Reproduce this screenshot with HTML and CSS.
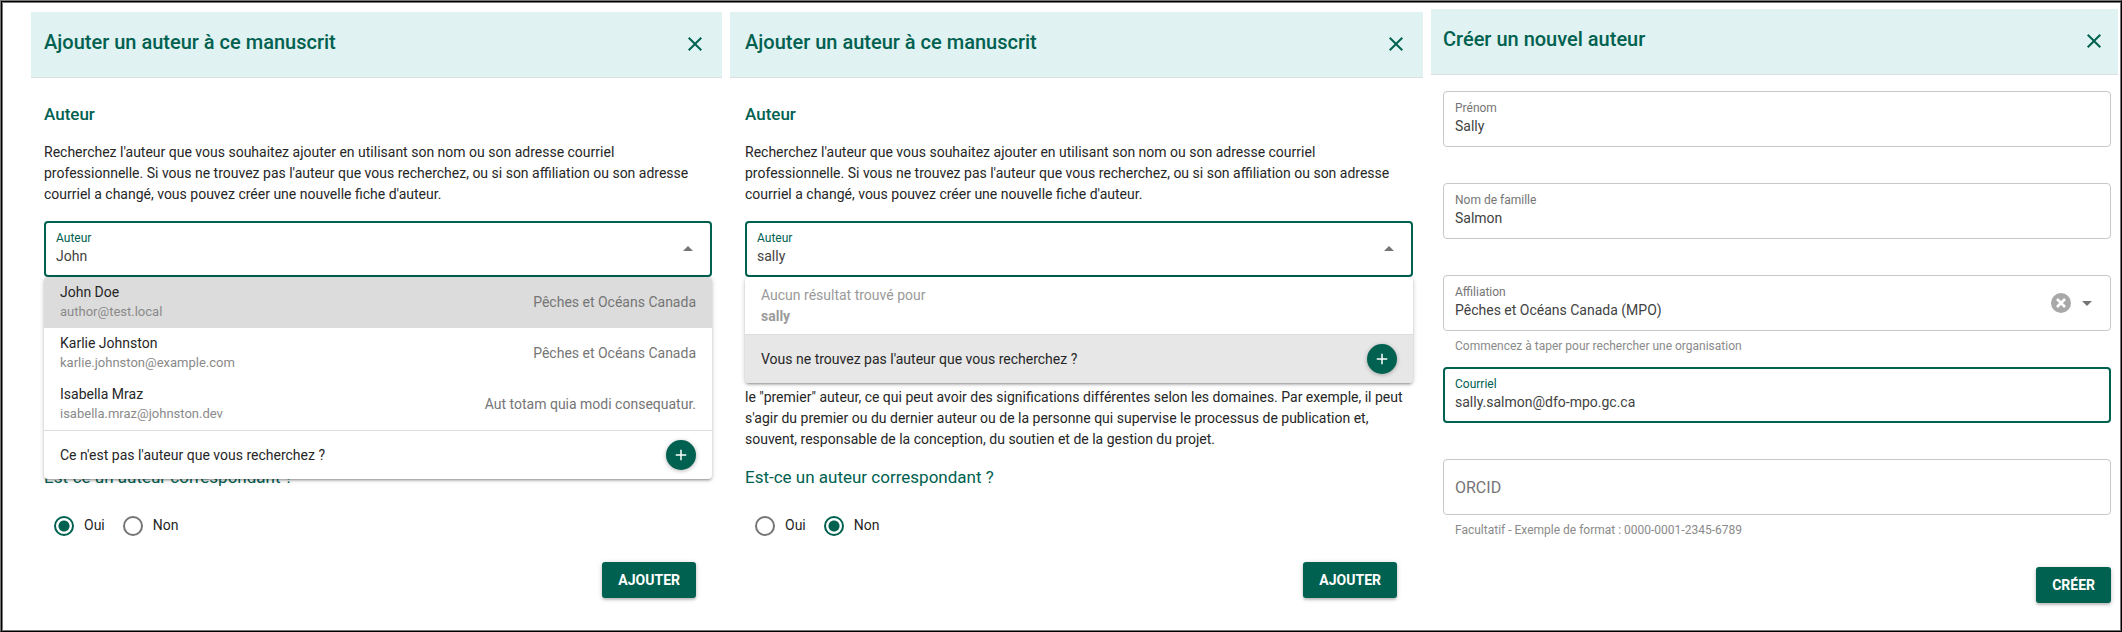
FILE: index.html
```
<!DOCTYPE html>
<html lang="fr">
<head>
<meta charset="utf-8">
<title>Auteurs du manuscrit</title>
<link rel="stylesheet" href="styles.css">
</head>
<body>
<main class="board">

  <section class="panel panel-search">
    <header class="panel-header">
      <h1 class="panel-title">Ajouter un auteur à ce manuscrit</h1>
      <button class="close" type="button" aria-label="Fermer"><svg viewBox="0 0 24 24"><path d="M19 6.41L17.59 5 12 10.59 6.41 5 5 6.41 10.59 12 5 17.59 6.41 19 12 13.41 17.59 19 19 17.59 13.41 12z"/></svg></button>
    </header>
    <form class="panel-body">
      <h2 class="section-title">Auteur</h2>
      <p class="text">Recherchez l'auteur que vous souhaitez ajouter en utilisant son nom ou son adresse courriel professionnelle. Si vous ne trouvez pas l'auteur que vous recherchez, ou si son affiliation ou son adresse courriel a changé, vous pouvez créer une nouvelle fiche d'auteur.</p>
      <div class="combo">
        <div class="field field-active">
          <div class="field-main">
            <label class="field-label" for="author-1">Auteur</label>
            <input class="field-input" id="author-1" type="text" value="John">
          </div>
          <svg class="icon" viewBox="0 0 24 24"><path d="M7 14l5-5 5 5z"/></svg>
        </div>
        <div class="menu">
          <ul class="options">
            <li class="option option-selected">
              <div><div class="option-name">John Doe</div><div class="option-mail">author@test.local</div></div>
              <div class="option-org">Pêches et Océans Canada</div>
            </li>
            <li class="option">
              <div><div class="option-name">Karlie Johnston</div><div class="option-mail">karlie.johnston@example.com</div></div>
              <div class="option-org">Pêches et Océans Canada</div>
            </li>
            <li class="option">
              <div><div class="option-name">Isabella Mraz</div><div class="option-mail">isabella.mraz@johnston.dev</div></div>
              <div class="option-org">Aut totam quia modi consequatur.</div>
            </li>
          </ul>
          <div class="menu-footer">
            <span>Ce n'est pas l'auteur que vous recherchez ?</span>
            <button class="add" type="button" aria-label="Créer un auteur"><svg viewBox="0 0 24 24"><path d="M19 13h-6v6h-2v-6H5v-2h6V5h2v6h6v2z"/></svg></button>
          </div>
        </div>
      </div>
      <fieldset class="choice">
        <legend class="question">Est-ce un auteur correspondant ?</legend>
        <div class="radios">
          <label class="radio"><input type="radio" name="corr-1" checked>Oui</label>
          <label class="radio"><input type="radio" name="corr-1">Non</label>
        </div>
      </fieldset>
      <div class="actions"><button class="submit" type="button">AJOUTER</button></div>
    </form>
  </section>

  <section class="panel panel-empty">
    <header class="panel-header">
      <h1 class="panel-title">Ajouter un auteur à ce manuscrit</h1>
      <button class="close" type="button" aria-label="Fermer"><svg viewBox="0 0 24 24"><path d="M19 6.41L17.59 5 12 10.59 6.41 5 5 6.41 10.59 12 5 17.59 6.41 19 12 13.41 17.59 19 19 17.59 13.41 12z"/></svg></button>
    </header>
    <form class="panel-body">
      <h2 class="section-title">Auteur</h2>
      <p class="text">Recherchez l'auteur que vous souhaitez ajouter en utilisant son nom ou son adresse courriel professionnelle. Si vous ne trouvez pas l'auteur que vous recherchez, ou si son affiliation ou son adresse courriel a changé, vous pouvez créer une nouvelle fiche d'auteur.</p>
      <div class="combo">
        <div class="field field-active">
          <div class="field-main">
            <label class="field-label" for="author-2">Auteur</label>
            <input class="field-input" id="author-2" type="text" value="sally">
          </div>
          <svg class="icon" viewBox="0 0 24 24"><path d="M7 14l5-5 5 5z"/></svg>
        </div>
        <div class="menu">
          <div class="no-result">Aucun résultat trouvé pour<br><strong>sally</strong></div>
          <div class="menu-footer menu-footer-hover">
            <span>Vous ne trouvez pas l'auteur que vous recherchez ?</span>
            <button class="add" type="button" aria-label="Créer un auteur"><svg viewBox="0 0 24 24"><path d="M19 13h-6v6h-2v-6H5v-2h6V5h2v6h6v2z"/></svg></button>
          </div>
        </div>
      </div>
      <p class="text note">le "premier" auteur, ce qui peut avoir des significations différentes selon les domaines. Par exemple, il peut s'agir du premier ou du dernier auteur ou de la personne qui supervise le processus de publication et, souvent, responsable de la conception, du soutien et de la gestion du projet.</p>
      <fieldset class="choice">
        <legend class="question">Est-ce un auteur correspondant ?</legend>
        <div class="radios">
          <label class="radio"><input type="radio" name="corr-2">Oui</label>
          <label class="radio"><input type="radio" name="corr-2" checked>Non</label>
        </div>
      </fieldset>
      <div class="actions"><button class="submit" type="button">AJOUTER</button></div>
    </form>
  </section>

  <section class="panel panel-create">
    <header class="panel-header">
      <h1 class="panel-title">Créer un nouvel auteur</h1>
      <button class="close" type="button" aria-label="Fermer"><svg viewBox="0 0 24 24"><path d="M19 6.41L17.59 5 12 10.59 6.41 5 5 6.41 10.59 12 5 17.59 6.41 19 12 13.41 17.59 19 19 17.59 13.41 12z"/></svg></button>
    </header>
    <form class="panel-body fields">
      <div class="field-group">
        <div class="field">
          <div class="field-main">
            <label class="field-label" for="first">Prénom</label>
            <input class="field-input" id="first" type="text" value="Sally">
          </div>
        </div>
      </div>
      <div class="field-group">
        <div class="field">
          <div class="field-main">
            <label class="field-label" for="last">Nom de famille</label>
            <input class="field-input" id="last" type="text" value="Salmon">
          </div>
        </div>
      </div>
      <div class="field-group">
        <div class="field">
          <div class="field-main">
            <label class="field-label" for="org">Affiliation</label>
            <input class="field-input" id="org" type="text" value="Pêches et Océans Canada (MPO)">
          </div>
          <button class="clear" type="button" aria-label="Effacer"><svg class="icon" viewBox="0 0 24 24"><circle cx="12" cy="12" r="10"/><path d="M8 8l8 8M16 8l-8 8" stroke="#fff" stroke-width="2.6"/></svg></button>
          <svg class="icon" viewBox="0 0 24 24"><path d="M7 10l5 5 5-5z"/></svg>
        </div>
        <div class="hint">Commencez à taper pour rechercher une organisation</div>
      </div>
      <div class="field-group">
        <div class="field field-active">
          <div class="field-main">
            <label class="field-label" for="mail">Courriel</label>
            <input class="field-input" id="mail" type="text" value="sally.salmon@dfo-mpo.gc.ca">
          </div>
        </div>
      </div>
      <div class="field-group">
        <div class="field">
          <input class="field-input field-input-empty" id="orcid" type="text" placeholder="ORCID" aria-label="ORCID">
        </div>
        <div class="hint">Facultatif - Exemple de format : 0000-0001-2345-6789</div>
      </div>
      <div class="actions"><button class="submit" type="button">CRÉER</button></div>
    </form>
  </section>

</main>
</body>
</html>
```
FILE: styles.css
```
:root {
  --primary: #006150;
  --text: #262626;
  --muted: #757575;
}

* { box-sizing: border-box; }

body {
  margin: 0;
  background: #fff;
  color: var(--text);
  font: 14px/21px Roboto, sans-serif;
}

h1, h2, p, ul, fieldset { margin: 0; padding: 0; border: 0; }
ul { list-style: none; }
button, input { font: inherit; color: inherit; }
svg { display: block; fill: currentColor; }

.board {
  display: grid;
  grid-template-columns: 691fr 693fr 687fr;
  column-gap: 8px;
  align-items: start;
  min-height: 100vh;
  padding: 8px 3px 24px 30px;
  border: 1px solid;
  border-color: #777 #000 #000 #777;
  box-shadow: inset 1px 1px 0 #000, inset 2px 2px 0 #777, inset -1px -1px 0 #777;
}

.panel { min-width: 0; }
.panel-search { padding-top: 3px; --start: 13px; --end: 10px; --close: 15px; }
.panel-empty { padding-top: 3px; --start: 15px; --end: 10px; --close: 15px; }
.panel-create { --start: 12px; --end: 7px; --close: 12px; }

.panel-header {
  display: flex;
  align-items: center;
  justify-content: space-between;
  height: 66px;
  padding: 0 var(--close) 2px var(--start);
  background: #e0f2f1;
  border-bottom: 1px solid #dcdfdf;
  color: var(--primary);
}

.panel-title { padding-bottom: 4px; font-size: 20px; line-height: 32px; font-weight: 500; }

.close { padding: 0; border: 0; background: none; color: inherit; cursor: pointer; }
.close svg { width: 24px; height: 24px; }

.panel-body { padding: 0 var(--end) 0 var(--start); }

.section-title {
  margin: 22px 0 10px;
  font-size: 17px;
  line-height: 28px;
  font-weight: 500;
  color: var(--primary);
}

.text { padding: 4px 12px 0 0; }

.combo { position: relative; margin-top: 16px; }

.field {
  display: flex;
  align-items: center;
  height: 56px;
  padding: 0 11px;
  border: 1px solid #c8c8c8;
  border-radius: 4px;
  color: #424242;
}
.field-active { padding: 0 10px; border: 2px solid var(--primary); }

.field-main { flex: 1; min-width: 0; display: flex; flex-direction: column; padding-bottom: 2px; }
.field-label { font-size: 12px; line-height: 16px; color: var(--muted); }
.field-active .field-label { color: var(--primary); }
.field-input {
  width: 100%;
  height: 20px;
  padding: 0;
  border: 0;
  outline: 0;
  background: none;
  line-height: 20px;
}
.field-input-empty { font-size: 16px; height: 24px; }
.field-input-empty::placeholder { color: var(--muted); opacity: 1; }

.icon { width: 24px; height: 24px; color: #757575; }
.clear { margin-right: 2px; padding: 0; border: 0; background: none; cursor: pointer; }
.clear .icon { color: #a8a8a8; }

.hint { padding: 8px 12px 0; font-size: 12px; line-height: 14px; color: #8a8a8a; }

.menu {
  position: absolute;
  z-index: 1;
  top: 100%;
  left: 0;
  right: 0;
  overflow: hidden;
  background: #fff;
  border-radius: 4px;
  box-shadow: 0 1px 5px rgba(0, 0, 0, .2), 0 2px 2px rgba(0, 0, 0, .14), 0 3px 1px -2px rgba(0, 0, 0, .12);
}

.option {
  display: flex;
  align-items: center;
  justify-content: space-between;
  height: 51px;
  padding: 0 16px;
}
.option-selected { background: #dcdcdc; }
.option-name { line-height: 20px; }
.option-mail { padding-bottom: 1px; font-size: 13px; line-height: 20px; color: #8a8a8a; }
.option-org { color: var(--muted); }

.no-result { padding: 8px 16px 7px; color: #9a9a9a; }

.menu-footer {
  display: flex;
  align-items: center;
  justify-content: space-between;
  height: 49px;
  padding: 0 16px;
  border-top: 1px solid #dcdcdc;
}
.menu-footer-hover { background: #e7e7e7; }

.add {
  display: flex;
  align-items: center;
  justify-content: center;
  width: 30px;
  height: 30px;
  padding: 0;
  border: 0;
  border-radius: 50%;
  background: var(--primary);
  color: #fff;
  box-shadow: 0 1px 4px rgba(0, 0, 0, .3);
  cursor: pointer;
}
.add svg { width: 18px; height: 18px; }

.note { margin-top: 106px; padding-right: 0; }

.choice { min-width: 0; }
.panel-search .choice { margin-top: 186px; }
.panel-empty .choice { margin-top: 13px; }
.question { padding: 0; font-size: 17px; line-height: 28px; color: var(--primary); }

.radios { display: flex; gap: 18px; padding: 24px 10px 0; }
.radio { display: flex; align-items: center; gap: 10px; }
.radio input {
  appearance: none;
  width: 20px;
  height: 20px;
  margin: 0;
  border: 2px solid #757575;
  border-radius: 50%;
}
.radio input:checked {
  border-color: var(--primary);
  background: radial-gradient(circle, var(--primary) 5px, #fff 6px);
}

.actions { display: flex; justify-content: flex-end; padding: 26px 16px 0 0; }
.submit {
  height: 36px;
  padding: 0 16px;
  border: 0;
  border-radius: 3px;
  background: var(--primary);
  color: #fff;
  font-weight: 700;
  box-shadow: 0 1px 5px rgba(0, 0, 0, .2), 0 2px 2px rgba(0, 0, 0, .14);
  cursor: pointer;
}

.fields { padding-top: 16px; }
.field-group { height: 92px; }
.fields .actions { padding: 16px 0 0; }
```
